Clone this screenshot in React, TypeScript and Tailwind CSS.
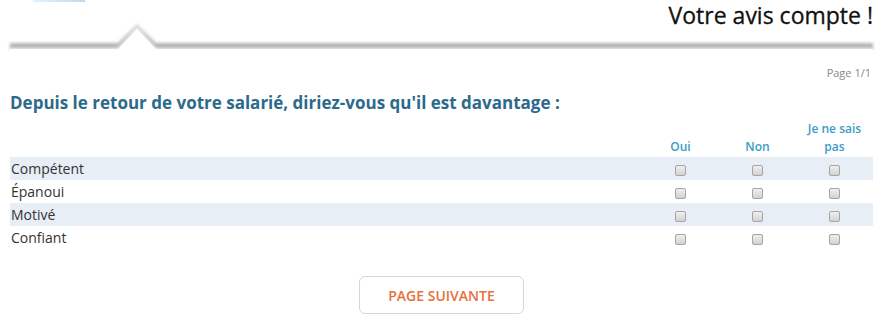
const rows = ['Compétent', 'Épanoui', 'Motivé', 'Confiant']

function Box() {
  return (
    <span className="inline-block h-[11px] w-[11px] rounded-[2px] border border-[#a5a5a5] bg-gradient-to-b from-[#efefef] to-[#d2d2d2] align-middle" />
  )
}

export default function App() {
  return (
    <div className="relative h-[321px] w-[881px] overflow-hidden bg-white font-['Open_Sans',sans-serif] text-[#333]">
      {/* logo remnant */}
      <div className="absolute left-[33px] top-0 h-[2px] w-[52px] bg-gradient-to-r from-[#e6f0fa] via-[#d3e5f5] to-[#bcd8f0]" />

      <div className="flex h-[22px] items-start justify-end pr-[8px]">
        <h1 className="pt-[1px] text-[23px] leading-[28px] text-[#111] [-webkit-text-stroke:0.3px_#111]">Votre avis compte !</h1>
      </div>

      <svg width="881" height="34" viewBox="0 0 881 34" className="block">
        <defs>
          <filter id="sh" x="-5%" y="-50%" width="110%" height="200%">
            <feGaussianBlur stdDeviation="1.5" />
          </filter>
          <linearGradient id="band" x1="0" y1="0" x2="0" y2="1">
            <stop offset="0" stopColor="#d6d6d6" />
            <stop offset="1" stopColor="#ababab" />
          </linearGradient>
        </defs>
        <path
          d="M10 21 L118 21 L137 2 L156 21 L873 21 L873 28 L10 28 Z"
          fill="url(#band)"
          filter="url(#sh)"
        />
        <path d="M10 27 L118 27 L137 7 L156 27 L873 27 L873 34 L10 34 Z" fill="#fff" />
        <path d="M10 27 L118 27 L137 7 L156 27 L873 27" fill="none" stroke="#fff" strokeWidth="2" filter="url(#sh)" />
      </svg>

      <div className="px-[10px]">
        <div className="mt-[10px] text-right text-[11px] leading-[14px] text-[#888]">Page 1/1</div>
        <h2 className="mt-[13px] text-[17px] font-bold leading-[20px] text-[#2b6a8a]">
          Depuis le retour de votre salarié, diriez-vous qu'il est davantage :
        </h2>

        <table className="mt-[7px] w-[863px] table-fixed border-collapse text-[14px]">
          <colgroup>
            <col className="w-[632px]" />
            <col className="w-[77px]" />
            <col className="w-[77px]" />
            <col className="w-[77px]" />
          </colgroup>
          <thead>
            <tr className="text-[12px] font-semibold leading-[18px] text-[#3a9cc5]">
              <th />
              <th className="pb-[1px] align-bottom font-semibold">Oui</th>
              <th className="pb-[1px] align-bottom font-semibold">Non</th>
              <th className="pb-[1px] align-bottom font-semibold">
                Je ne sais
                <br />
                pas
              </th>
            </tr>
          </thead>
          <tbody>
            {rows.map((r, i) => (
              <tr key={r} className={i % 2 === 0 ? 'h-[23px] bg-[#e8eef5]' : 'h-[23px] bg-white'}>
                <td className="pl-[1px] leading-[23px]">{r}</td>
                <td className="text-center">
                  <Box />
                </td>
                <td className="text-center">
                  <Box />
                </td>
                <td className="text-center">
                  <Box />
                </td>
              </tr>
            ))}
          </tbody>
        </table>

        <div className="mt-[27px] flex justify-center pl-[2px]">
          <button className="h-[38px] w-[165px] rounded-[6px] border border-[#c9d9e5] bg-white text-[14px] font-semibold text-[#e8703a]">
            PAGE SUIVANTE
          </button>
        </div>
      </div>
    </div>
  )
}
